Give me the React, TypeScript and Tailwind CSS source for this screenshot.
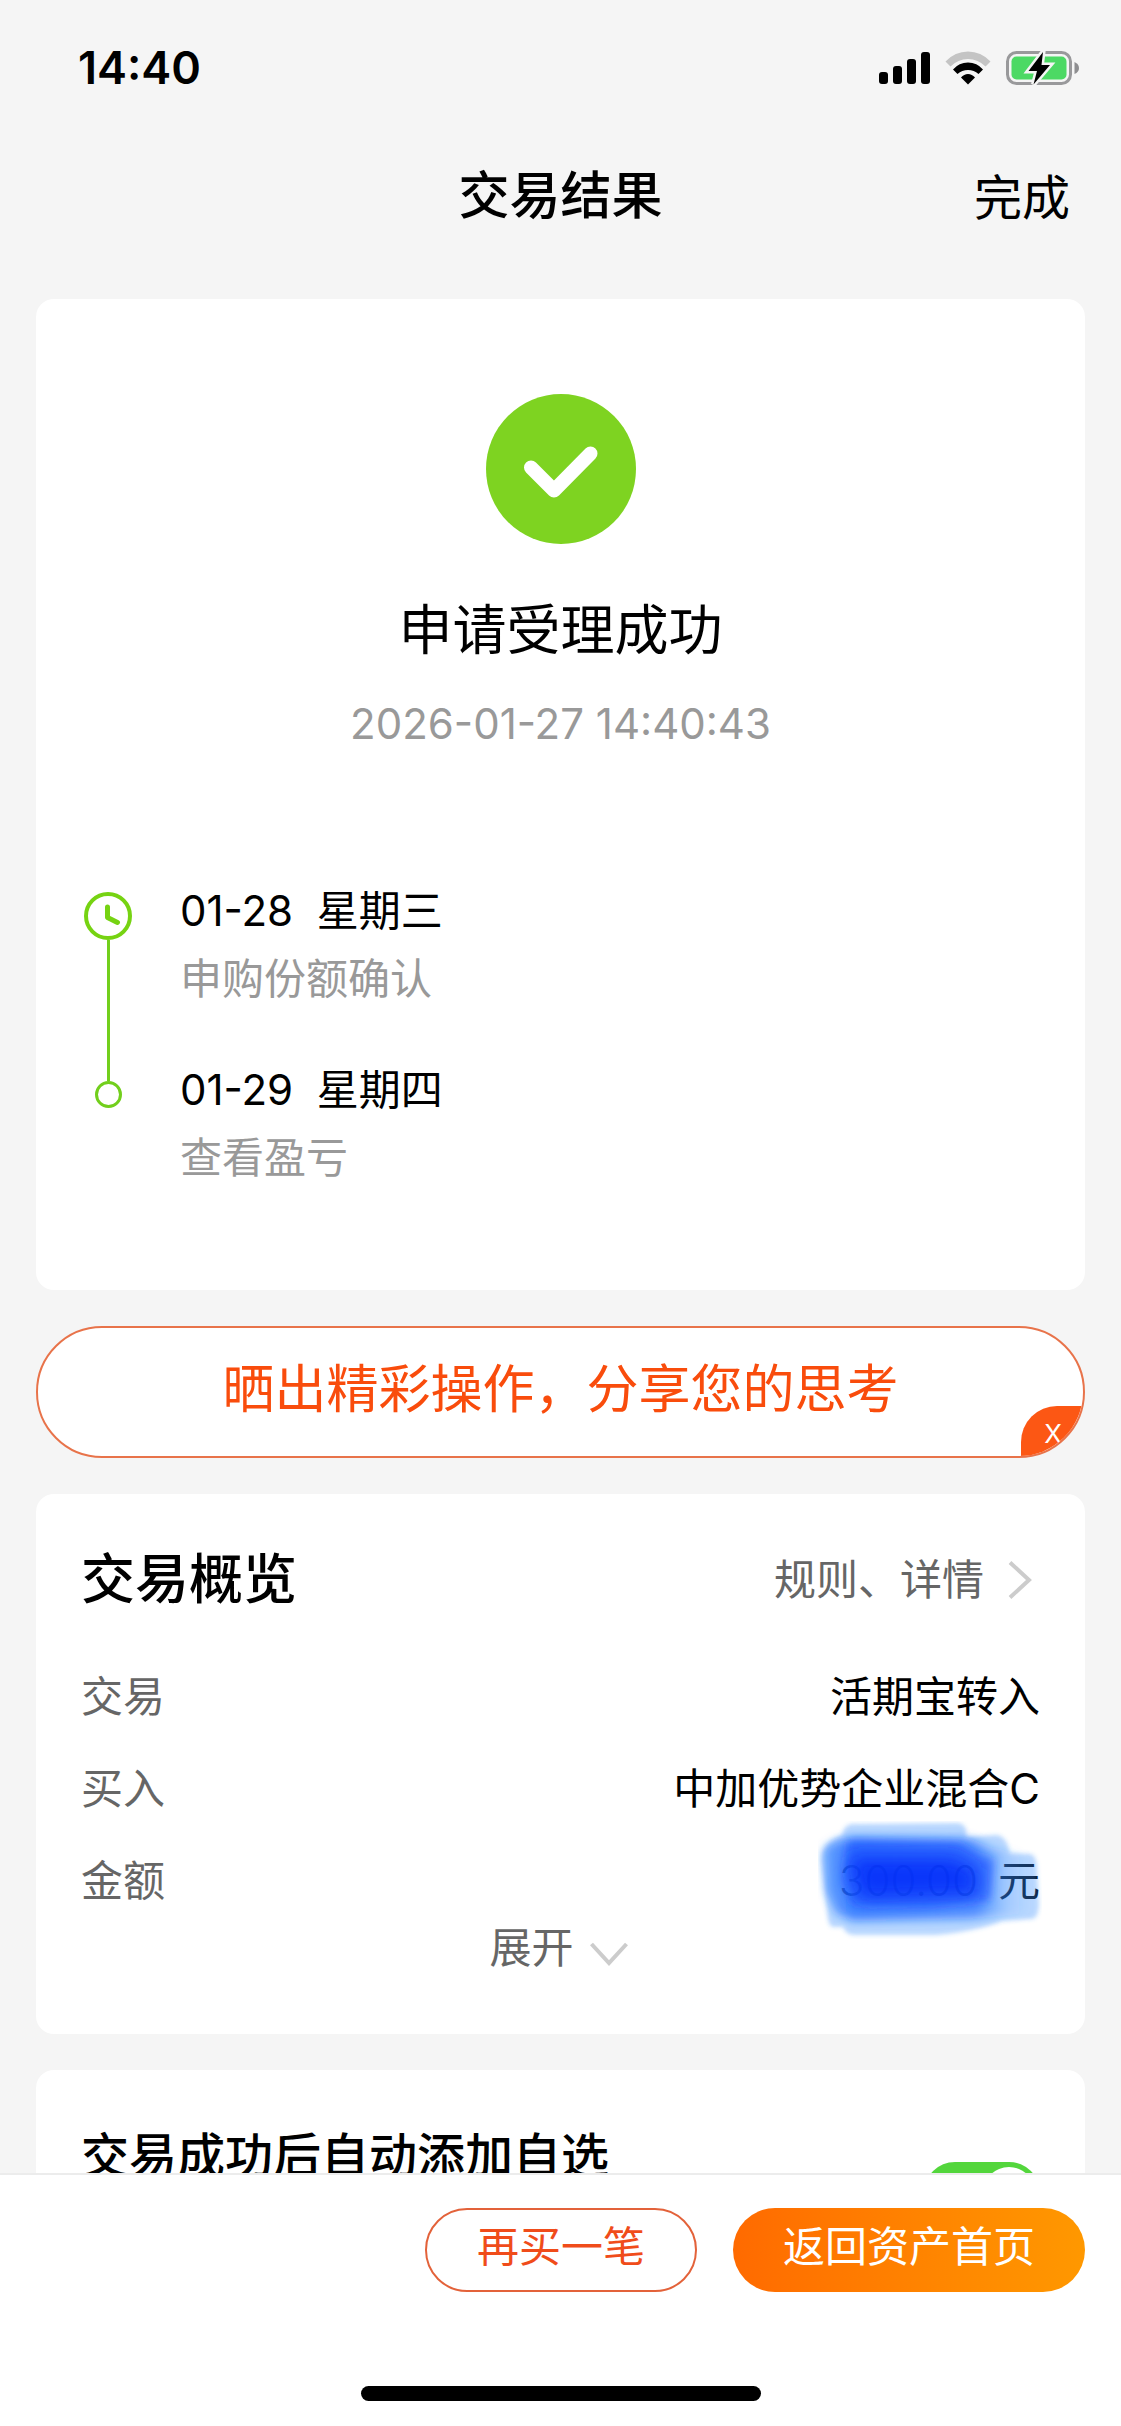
import React from "react";

const steps = [
  { date: "01-28", weekday: "星期三", label: "申购份额确认" },
  { date: "01-29", weekday: "星期四", label: "查看盈亏" },
];

function StatusBar() {
  return (
    <div className="flex h-[136px] shrink-0 items-center justify-between pl-[78px] pr-[42px]">
      <time className="text-[45px] leading-[60px] font-semibold">14:40</time>
      <div className="flex items-center gap-[15px]">
        <svg width="51" height="34" viewBox="0 0 51 34" aria-label="信号">
          <rect x="0" y="21" width="9" height="12" rx="3" />
          <rect x="14" y="15" width="9" height="18" rx="3" />
          <rect x="28" y="8" width="9" height="25" rx="3" />
          <rect x="42" y="1" width="9" height="32" rx="3" />
        </svg>
        <svg width="46" height="34" viewBox="0 0 46 34" aria-label="无线网络">
          <path d="M0.500 10.500 Q10 0.500 23 0.500 Q36 0.500 45.500 10.500 L40.500 15.500 Q33 8 23 8 Q13 8 5.500 15.500 Z" fill="#c4c4c4" />
          <path d="M8 18.500 Q14 11.500 23 11.500 Q32 11.500 38 18.500 L33.500 23 Q29 19 23 19 Q17 19 12.500 23 Z" />
          <path d="M16 26.500 Q19 23 23 23 Q27 23 30 26.500 L23 33.500 Z" />
        </svg>
        <svg width="73" height="34" viewBox="0 0 73 34" aria-label="正在充电">
          <rect x="1.500" y="1.500" width="63" height="31" rx="9" fill="none" stroke="#99999b" strokeWidth="3" />
          <rect x="5.500" y="5.500" width="55" height="23" rx="5" fill="#4cd964" />
          <path d="M68.500 11 Q73 13 73 17 Q73 21 68.500 23 Z" fill="#8e8e90" />
          <path d="M37 1 L22.500 20 H31 L27.500 33.500 L44 14 H35.500 Z" fill="#000" stroke="#f5f5f5" strokeWidth="5" paintOrder="stroke" />
        </svg>
      </div>
    </div>
  );
}

function ClockMark() {
  return (
    <svg className="shrink-0" width="48" height="48" viewBox="0 0 48 48" fill="none" stroke="#76d312" aria-hidden="true">
      <circle cx="24" cy="24" r="22" strokeWidth="4" />
      <path d="M23.500 15 V25.500 L33.500 30.500" strokeWidth="5" strokeLinecap="round" strokeLinejoin="round" />
    </svg>
  );
}

function Scribble() {
  return (
    <svg className="absolute -right-[2px] -top-[30px]" width="224" height="118" viewBox="0 0 224 118" aria-hidden="true">
      <defs>
        <filter id="edge" x="-10%" y="-10%" width="120%" height="120%">
          <feGaussianBlur stdDeviation="2" />
        </filter>
        <filter id="mid" x="-20%" y="-20%" width="140%" height="140%">
          <feGaussianBlur stdDeviation="5" />
        </filter>
        <filter id="core" x="-30%" y="-50%" width="160%" height="200%">
          <feGaussianBlur stdDeviation="9" />
        </filter>
        <linearGradient id="tail" x1="0" x2="1" y1="0" y2="0">
          <stop offset="0" stopColor="#1f78ff" stopOpacity="0.6" />
          <stop offset="0.15" stopColor="#1464ff" stopOpacity="0.7" />
          <stop offset="0.75" stopColor="#1464ff" stopOpacity="0.6" />
          <stop offset="0.9" stopColor="#2f84ff" stopOpacity="0.15" />
          <stop offset="1" stopColor="#2f84ff" stopOpacity="0" />
        </linearGradient>
      </defs>
      <path
        d="M26 8 Q30 2 40 3 L140 2 Q150 3 148 16 L178 14 Q188 14 192 32 L212 33 Q219 34 219 50 L221 84 Q220 99 212 98 L184 100 Q160 110 118 114 L36 114 Q27 113 25 106 L14 106 Q10 104 9 90 L3 40 Q2 22 24 14 Z"
        fill="#3d8fff"
        fillOpacity="0.36"
        filter="url(#edge)"
      />
      <path
        d="M6 30 Q10 20 36 16 L150 17 L172 26 L208 36 L210 92 L150 98 L34 100 L18 92 L8 70 Z"
        fill="url(#tail)"
        filter="url(#mid)"
      />
      <path d="M30 20 L142 22 L160 34 L176 38 L172 80 L110 86 L34 84 L24 60 Z" fill="#1a56ff" fillOpacity="0.66" filter="url(#mid)" />
      <path d="M30 36 L136 36 L160 50 L158 74 L42 78 Z" fill="#0228f8" fillOpacity="0.78" filter="url(#core)" />
    </svg>
  );
}

function Row({ label, children }: { label: string; children: React.ReactNode }) {
  return (
    <div className="flex justify-between">
      <dt className="text-[#666]">{label}</dt>
      <dd className="relative">{children}</dd>
    </div>
  );
}

export default function App() {
  return (
    <div className="flex h-screen flex-col bg-[#f5f5f5] font-['Inter','Noto_Sans_CJK_SC',sans-serif] text-[42px] leading-[60px] text-black">
      <StatusBar />
      <header className="grid h-[120px] shrink-0 grid-cols-3 items-center px-[51px]">
        <h1 className="col-start-2 text-center text-[51px] leading-[72px] font-medium whitespace-nowrap">交易结果</h1>
        <button type="button" className="justify-self-end pt-1 text-[48px] leading-[72px]">完成</button>
      </header>

      <main className="flex min-h-0 flex-1 flex-col gap-9 overflow-y-auto px-9 pt-[43px] [scrollbar-width:none]">
        <section className="shrink-0 rounded-[18px] bg-white px-12 pt-[95px] pb-[102px]">
          <div className="flex flex-col items-center">
            <svg width="150" height="150" viewBox="0 0 150 150" aria-hidden="true">
              <circle cx="75" cy="75" r="75" fill="#7ed321" />
              <path d="M45 73.500 L68 96.500 L104.500 59.500" fill="none" stroke="#fff" strokeWidth="14" strokeLinecap="round" strokeLinejoin="round" />
            </svg>
            <h2 className="mt-12 text-[54px] leading-[78px]">申请受理成功</h2>
            <time className="mt-6 text-[#999]">2026-01-27 14:40:43</time>
          </div>

          <ol className="mt-[127px]">
            {steps.map((step, i) => (
              <li key={step.date} className="flex gap-12">
                <div className="flex w-12 flex-col items-center">
                  {i === 0 ? (
                    <>
                      <div className="h-[11px] shrink-0" />
                      <ClockMark />
                      <div className="w-[3px] flex-1 bg-[#72cf1c]" />
                    </>
                  ) : (
                    <>
                      <div className="h-[21px] w-[3px] bg-[#72cf1c]" />
                      <div className="size-[27px] rounded-full border-3 border-[#72cf1c]" />
                    </>
                  )}
                </div>
                <div className={i === 0 ? "pb-[51px]" : ""}>
                  <p className="whitespace-pre">
                    {step.date}{"  "}{step.weekday}
                  </p>
                  <p className="mt-2 text-[#999]">{step.label}</p>
                </div>
              </li>
            ))}
          </ol>
        </section>

        <div className="relative shrink-0 overflow-hidden rounded-full border-2 border-[#e8734a] bg-white">
          <button type="button" className="block w-full pt-[26px] pb-[30px] text-center text-[52px] leading-[72px] text-[#f94c0c]">
            晒出精彩操作，分享您的思考
          </button>
          <button
            type="button"
            aria-label="关闭"
            className="absolute -right-[2px] -bottom-[2px] h-[52px] w-[64px] rounded-tl-[36px] bg-[#fc5714] pt-[3px] text-center text-[26px] leading-[48px] text-white"
          >
            X
          </button>
        </div>

        <section className="shrink-0 rounded-[18px] bg-white px-[45px] pt-[44px] pb-[56px]">
          <div className="flex items-center justify-between">
            <h2 className="text-[54px] leading-[84px] font-medium">交易概览</h2>
            <a href="#details" className="flex items-center gap-6 pr-2 text-[#666]">
              规则、详情
              <svg width="24" height="38" viewBox="0 0 24 38" fill="none" stroke="#ccc" strokeWidth="4" aria-hidden="true">
                <path d="M2 1.500 L21 19 L2 36.500" />
              </svg>
            </a>
          </div>
          <dl className="mt-[45px] flex flex-col gap-8">
            <Row label="交易">活期宝转入</Row>
            <Row label="买入">中加优势企业混合C</Row>
            <Row label="金额">
              <span className="mr-5 font-light">300.00</span>
              <span>元</span>
              <Scribble />
            </Row>
          </dl>
          <button type="button" className="mx-auto mt-[7px] flex items-center gap-4 pr-1 text-[#666]">
            展开
            <svg className="mt-3" width="38" height="24" viewBox="0 0 38 24" fill="none" stroke="#ccc" strokeWidth="4" aria-hidden="true">
              <path d="M1.500 2 L19 21 L36.500 2" />
            </svg>
          </button>
        </section>

        <section className="flex shrink-0 items-start justify-between rounded-t-[18px] bg-white px-[45px] pt-[50px]">
          <label htmlFor="auto-add" className="text-[48px] leading-[72px] font-medium">交易成功后自动添加自选</label>
          <input
            id="auto-add"
            type="checkbox"
            role="switch"
            defaultChecked
            className="mt-[42px] h-[62px] w-[116px] appearance-none rounded-full bg-[#ccc] p-[5px] before:block before:size-[52px] before:rounded-full before:bg-white checked:bg-[#53d63c] checked:before:ml-auto"
          />
        </section>
      </main>

      <footer className="shrink-0 border-t-2 border-[#ececec] bg-white px-9 pt-[33px] pb-[25px]">
        <div className="flex justify-end gap-9">
          <button type="button" className="rounded-full border-2 border-[#e3623a] px-[50px] pt-[7px] pb-[13px] text-[#f04c1a]">再买一笔</button>
          <button type="button" className="rounded-full bg-linear-to-r from-[#ff6a00] to-[#ff9800] px-[50px] pt-[9px] pb-[15px] text-white">返回资产首页</button>
        </div>
        <div className="mx-auto mt-[94px] h-[15px] w-[400px] rounded-full bg-black" />
      </footer>
    </div>
  );
}
